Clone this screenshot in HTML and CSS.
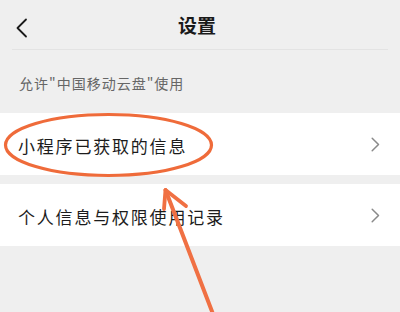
FILE: index.html
```html
<!DOCTYPE html>
<html lang="zh-CN">
<head>
<meta charset="utf-8">
<title>设置</title>
<link rel="stylesheet" href="styles.css">
</head>
<body>
<div class="page">
  <header class="topbar">
    <span class="back">
      <svg width="12" height="20" viewBox="0 0 12 20"><path d="M10 1.5 L1.5 10 L10 18.5" fill="none" stroke="#1a1a1a" stroke-width="1.8" stroke-linecap="round" stroke-linejoin="round"/></svg>
    </span>
    <h1 class="title">设置</h1>
  </header>
  <div class="section-label">允许"中国移动云盘"使用</div>
  <div class="list">
    <div class="row">
      <span class="row-text">小程序已获取的信息</span>
      <svg class="chev" width="9" height="15" viewBox="0 0 9 15"><path d="M1.2 1.2 L7.5 7.5 L1.2 13.8" fill="none" stroke="#8a8a8a" stroke-width="1.5" stroke-linecap="round" stroke-linejoin="round"/></svg>
    </div>
    <div class="row">
      <span class="row-text">个人信息与权限使用记录</span>
      <svg class="chev" width="9" height="15" viewBox="0 0 9 15"><path d="M1.2 1.2 L7.5 7.5 L1.2 13.8" fill="none" stroke="#8a8a8a" stroke-width="1.5" stroke-linecap="round" stroke-linejoin="round"/></svg>
    </div>
  </div>
  <svg class="annot" width="400" height="312" viewBox="0 0 400 312">
    <ellipse cx="108.5" cy="145" rx="103" ry="30.5" fill="none" stroke="#ef6b3a" stroke-width="3.2"/>
    <path d="M213 314 L165.5 190" fill="none" stroke="#f07043" stroke-width="4" stroke-linecap="round"/>
    <path d="M164 209 L165.5 190 L186 206" fill="none" stroke="#f07043" stroke-width="3.8" stroke-linecap="round" stroke-linejoin="round"/>
  </svg>
</div>
</body>
</html>
```
FILE: styles.css
```css
html, body {
  margin: 0;
  padding: 0;
  background: #efefef;
}
body {
  font-family: "Noto Sans CJK SC", "Noto Sans", sans-serif;
  color: #1c1c1c;
}
.page {
  position: relative;
  width: 400px;
  height: 312px;
  overflow: hidden;
  background: #efefef;
}
.topbar {
  position: relative;
  height: 50px;
  margin: 0 12px;
  border-bottom: 1px solid #e3e3e3;
  box-sizing: border-box;
  display: flex;
  align-items: center;
  justify-content: center;
}
.back {
  position: absolute;
  left: 4px;
  top: 18px;
  display: flex;
}
.title {
  margin: 0;
  font-size: 19px;
  font-weight: 700;
  letter-spacing: 0;
  line-height: 1;
  color: #1a1a1a;
  transform: translateX(-3px);
}
.section-label {
  height: 63px;
  box-sizing: border-box;
  padding: 23px 0 0 19px;
  font-size: 14px;
  letter-spacing: 1px;
  color: #666;
  line-height: 20px;
}
.list {
  display: flex;
  flex-direction: column;
  gap: 9px;
}
.row {
  height: 62px;
  background: #fff;
  display: flex;
  align-items: center;
  justify-content: space-between;
  padding: 0 20px 0 18px;
}
.row-text {
  font-size: 17px;
  letter-spacing: 1.8px;
  line-height: 1;
  color: #1c1c1c;
  margin-top: 2px;
}
.chev {
  display: block;
}
.annot {
  position: absolute;
  left: 0;
  top: 0;
  pointer-events: none;
}
```
